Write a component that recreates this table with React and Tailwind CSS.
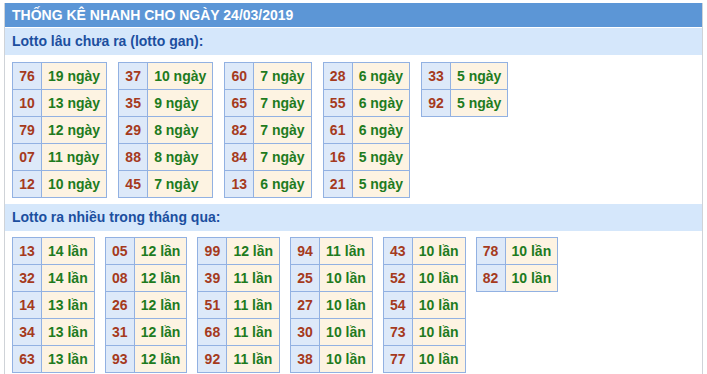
import React from 'react';

const ganTables = [
  [['76', '19 ngày'], ['10', '13 ngày'], ['79', '12 ngày'], ['07', '11 ngày'], ['12', '10 ngày']],
  [['37', '10 ngày'], ['35', '9 ngày'], ['29', '8 ngày'], ['88', '8 ngày'], ['45', '7 ngày']],
  [['60', '7 ngày'], ['65', '7 ngày'], ['82', '7 ngày'], ['84', '7 ngày'], ['13', '6 ngày']],
  [['28', '6 ngày'], ['55', '6 ngày'], ['61', '6 ngày'], ['16', '5 ngày'], ['21', '5 ngày']],
  [['33', '5 ngày'], ['92', '5 ngày']],
];

const nhieuTables = [
  [['13', '14 lần'], ['32', '14 lần'], ['14', '13 lần'], ['34', '13 lần'], ['63', '13 lần']],
  [['05', '12 lần'], ['08', '12 lần'], ['26', '12 lần'], ['31', '12 lần'], ['93', '12 lần']],
  [['99', '12 lần'], ['39', '11 lần'], ['51', '11 lần'], ['68', '11 lần'], ['92', '11 lần']],
  [['94', '11 lần'], ['25', '10 lần'], ['27', '10 lần'], ['30', '10 lần'], ['38', '10 lần']],
  [['43', '10 lần'], ['52', '10 lần'], ['54', '10 lần'], ['73', '10 lần'], ['77', '10 lần']],
  [['78', '10 lần'], ['82', '10 lần']],
];

const StatTable = ({ rows }) => (
  <table className="border-collapse self-start">
    <tbody>
      {rows.map(([num, val]) => (
        <tr key={num + val} className="h-[27px]">
          <td className="w-[29px] border border-[#92b1e2] bg-[#dde9f9] text-center text-[14px] font-bold text-[#a53a1d] p-0">
            {num}
          </td>
          <td className="border border-[#92b1e2] bg-[#fdf3e2] px-[6px] py-0 text-[14px] font-bold text-[#1e7b1e] whitespace-nowrap">
            {val}
          </td>
        </tr>
      ))}
    </tbody>
  </table>
);

const SubHeader = ({ children }) => (
  <div className="h-[27px] bg-[#d5e7fb] pl-[7px] flex items-center text-[14px] font-bold text-[#1c4f9f]">
    {children}
  </div>
);

export default function App() {
  return (
    <div className="bg-white min-h-[374px] pt-[3px] font-['Liberation_Sans',Arial,sans-serif]">
      <div className="ml-[4px] w-[699px] border-x border-[#cfd3d8] min-h-[371px]">
        {/* Title bar */}
        <div className="h-[24px] bg-[#5c96d6] pl-[7px] flex items-center text-[14px] font-bold text-white">
          THỐNG KÊ NHANH CHO NGÀY 24/03/2019
        </div>

        <div className="mt-[1px]">
          <SubHeader>Lotto lâu chưa ra (lotto gan):</SubHeader>
        </div>
        <div className="flex gap-[11px] pl-[7px] pt-[7px] pb-[6px]">
          {ganTables.map((rows, i) => (
            <StatTable key={i} rows={rows} />
          ))}
        </div>

        <SubHeader>Lotto ra nhiều trong tháng qua:</SubHeader>
        <div className="flex gap-[10px] pl-[7px] pt-[6px] pb-[6px]">
          {nhieuTables.map((rows, i) => (
            <StatTable key={i} rows={rows} />
          ))}
        </div>
      </div>
    </div>
  );
}
